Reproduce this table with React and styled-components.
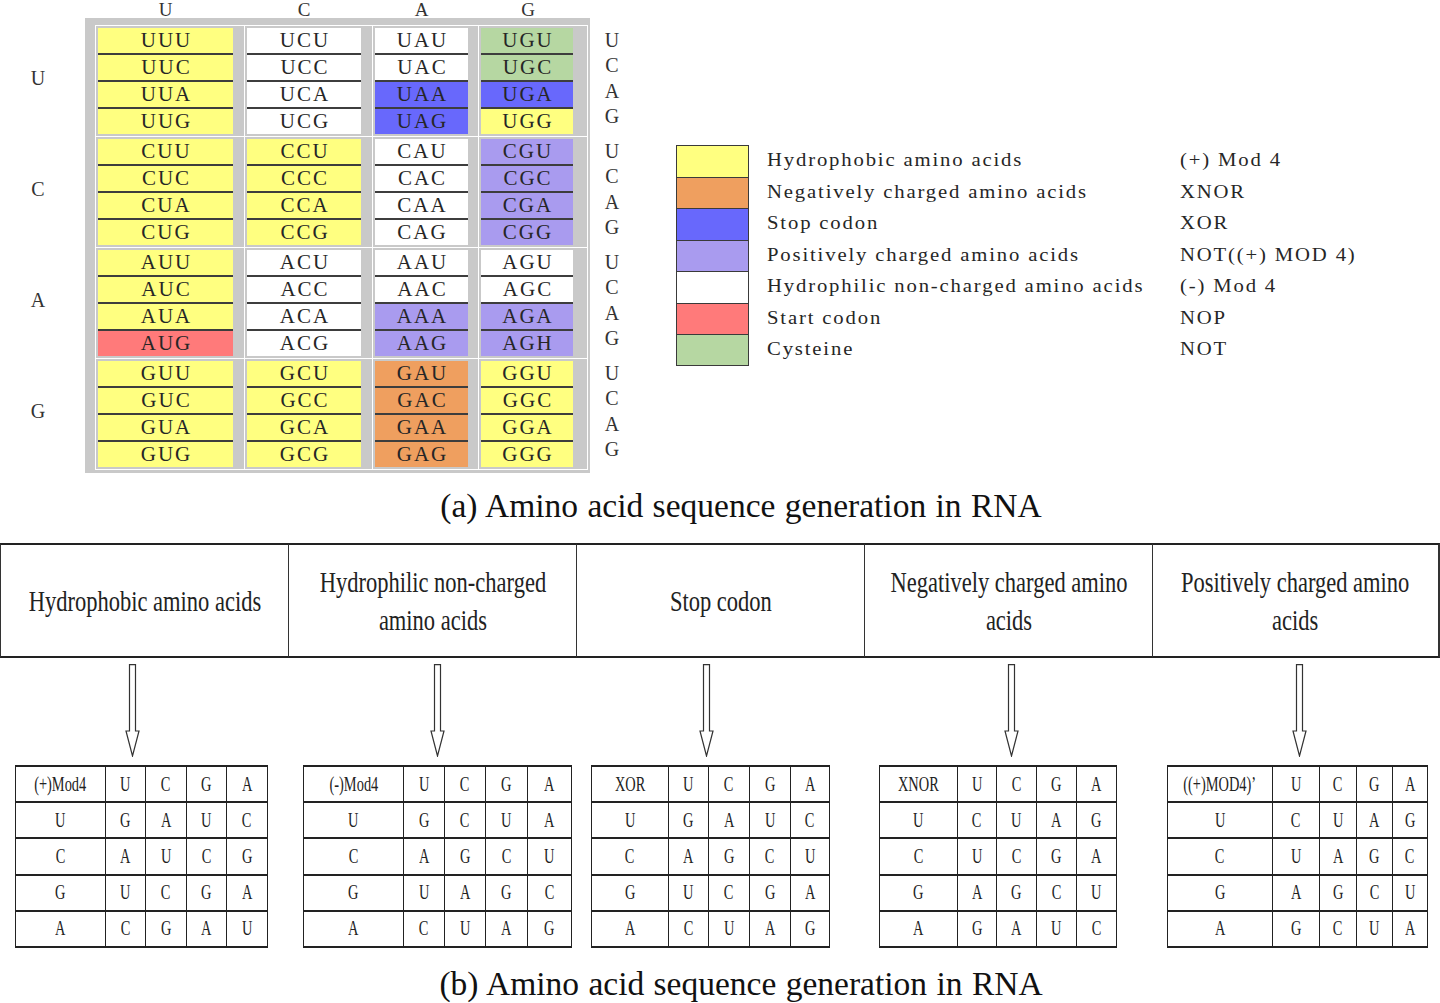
import React from "react";
import styled, { createGlobalStyle } from "styled-components";

const GlobalStyle = createGlobalStyle`
  html, body { margin: 0; padding: 0; background: #fff; overflow: hidden; }
  body { font-family: "Liberation Serif", "Times New Roman", serif; color: #222; }
  * { box-sizing: border-box; }
`;

const C = {
  Y: "#ffff80",
  W: "#ffffff",
  B: "#6868fc",
  P: "#a99bef",
  O: "#ef9f5f",
  R: "#ff7a7a",
  G: "#b6d7a2",
};

const groups = [
  [
    [["UUU", "Y"], ["UUC", "Y"], ["UUA", "Y"], ["UUG", "Y"]],
    [["UCU", "W"], ["UCC", "W"], ["UCA", "W"], ["UCG", "W"]],
    [["UAU", "W"], ["UAC", "W"], ["UAA", "B"], ["UAG", "B"]],
    [["UGU", "G"], ["UGC", "G"], ["UGA", "B"], ["UGG", "Y"]],
  ],
  [
    [["CUU", "Y"], ["CUC", "Y"], ["CUA", "Y"], ["CUG", "Y"]],
    [["CCU", "Y"], ["CCC", "Y"], ["CCA", "Y"], ["CCG", "Y"]],
    [["CAU", "W"], ["CAC", "W"], ["CAA", "W"], ["CAG", "W"]],
    [["CGU", "P"], ["CGC", "P"], ["CGA", "P"], ["CGG", "P"]],
  ],
  [
    [["AUU", "Y"], ["AUC", "Y"], ["AUA", "Y"], ["AUG", "R"]],
    [["ACU", "W"], ["ACC", "W"], ["ACA", "W"], ["ACG", "W"]],
    [["AAU", "W"], ["AAC", "W"], ["AAA", "P"], ["AAG", "P"]],
    [["AGU", "W"], ["AGC", "W"], ["AGA", "P"], ["AGH", "P"]],
  ],
  [
    [["GUU", "Y"], ["GUC", "Y"], ["GUA", "Y"], ["GUG", "Y"]],
    [["GCU", "Y"], ["GCC", "Y"], ["GCA", "Y"], ["GCG", "Y"]],
    [["GAU", "O"], ["GAC", "O"], ["GAA", "O"], ["GAG", "O"]],
    [["GGU", "Y"], ["GGC", "Y"], ["GGA", "Y"], ["GGG", "Y"]],
  ],
];

const bases = ["U", "C", "A", "G"];
const stackWidths = [135, 114, 93, 92];

const legend = [
  ["Y", "Hydrophobic amino acids", "(+) Mod 4"],
  ["O", "Negatively charged amino acids", "XNOR"],
  ["B", "Stop codon", "XOR"],
  ["P", "Positively charged amino acids", "NOT((+) MOD 4)"],
  ["W", "Hydrophilic non-charged amino acids", "(-) Mod 4"],
  ["R", "Start codon", "NOP"],
  ["G", "Cysteine", "NOT"],
];

const partB = [
  {
    head: ["Hydrophobic amino acids"],
    arrow: 124.5,
    cols: [90, 40, 41, 40, 41],
    op: "(+)Mod4",
    rows: [
      ["U", "G", "A", "U", "C"],
      ["C", "A", "U", "C", "G"],
      ["G", "U", "C", "G", "A"],
      ["A", "C", "G", "A", "U"],
    ],
  },
  {
    head: ["Hydrophilic non-charged", "amino acids"],
    arrow: 141.5,
    cols: [100, 41, 41, 42, 44],
    op: "(-)Mod4",
    rows: [
      ["U", "G", "C", "U", "A"],
      ["C", "A", "G", "C", "U"],
      ["G", "U", "A", "G", "C"],
      ["A", "C", "U", "A", "G"],
    ],
  },
  {
    head: ["Stop codon"],
    arrow: 122.5,
    cols: [77, 40, 41, 41, 39],
    op: "XOR",
    rows: [
      ["U", "G", "A", "U", "C"],
      ["C", "A", "G", "C", "U"],
      ["G", "U", "C", "G", "A"],
      ["A", "C", "U", "A", "G"],
    ],
  },
  {
    head: ["Negatively charged amino", "acids"],
    arrow: 139.5,
    cols: [78, 39, 40, 40, 40],
    op: "XNOR",
    rows: [
      ["U", "C", "U", "A", "G"],
      ["C", "U", "C", "G", "A"],
      ["G", "A", "G", "C", "U"],
      ["A", "G", "A", "U", "C"],
    ],
  },
  {
    head: ["Positively charged amino", "acids"],
    arrow: 139.5,
    cols: [105, 47, 37, 36, 35],
    op: "((+)MOD4)’",
    rows: [
      ["U", "C", "U", "A", "G"],
      ["C", "U", "A", "G", "C"],
      ["G", "A", "G", "C", "U"],
      ["A", "G", "C", "U", "A"],
    ],
  },
];

/* ---------- layout ---------- */
const Page = styled.div`
  width: 1440px;
  height: 1003px;
  display: flex;
  flex-direction: column;
`;

const TopSection = styled.div`
  display: flex;
  align-items: flex-start;
  height: 473px;
`;

const CodonBlock = styled.div`
  display: flex;
  flex-direction: column;
`;

const ColHeader = styled.div`
  display: grid;
  grid-template-columns: 135px 114px 93px 92px;
  column-gap: 14px;
  padding-left: 98px;
  height: 18px;
`;

const BaseLetter = styled.div`
  text-align: center;
  font-size: 19px;
  line-height: 19px;
  color: #333;
`;

const CodonBody = styled.div`
  display: flex;
`;

const SideLabels = styled.div`
  width: ${(p) => p.$w}px;
  padding-top: 8px;
  padding-right: ${(p) => p.$pr || 0}px;
  display: flex;
  flex-direction: column;
  gap: 1px;
`;

const SideGroup = styled.div`
  height: 110px;
  padding: 2px 0 7px;
  display: flex;
  flex-direction: column;
  justify-content: center;
`;

const SideLetter = styled.div`
  flex: ${(p) => (p.$fill ? 1 : "0 0 auto")};
  display: flex;
  align-items: center;
  justify-content: center;
  font-size: 20px;
  color: #333;
`;

const Frame = styled.div`
  background: #c9c9c9;
  padding: 7px 2px 3px 10px;
`;

const GroupGrid = styled.div`
  display: grid;
  grid-template-columns: 148px 127px 105px 108px;
  grid-auto-rows: 110px;
  gap: 1px;
  padding: 1px;
  background: #fff;
`;

const Group = styled.div`
  background: #c9c9c9;
  padding: 2px 0 0 2px;
`;

const Stack = styled.div`
  width: ${(p) => p.$w}px;
  height: 101px;
  display: flex;
  flex-direction: column;
`;

const Codon = styled.div`
  flex: 1;
  background: ${(p) => p.$bg};
  border-top: ${(p) => (p.$first ? "none" : "2px solid #3d3d3d")};
  display: flex;
  align-items: center;
  justify-content: center;
  padding-left: 2px;
  font-size: 21px;
  letter-spacing: 2px;
  color: #262626;
`;

const Legend = styled.div`
  margin-left: 42px;
  margin-top: 145px;
  display: grid;
  grid-template-columns: 73px 431px auto;
  grid-auto-rows: 31.5px;
`;

const Swatch = styled.div`
  background: ${(p) => p.$bg};
  border: 1px solid #3a3a3a;
  border-bottom: ${(p) => (p.$last ? "1px solid #3a3a3a" : "none")};
`;

const LegendCell = styled.div`
  display: flex;
  align-items: center;
  padding-left: ${(p) => p.$pl || 0}px;
`;

const WideText = styled.span`
  display: inline-block;
  font-size: 18px;
  letter-spacing: 1.6px;
  white-space: nowrap;
  transform: scaleX(1.15);
  transform-origin: left center;
  color: #262626;
`;

const Caption = styled.div`
  font-size: 33.5px;
  line-height: 40px;
  text-align: center;
  padding-left: 42px;
  word-spacing: 1px;
  color: #111;
  margin-top: ${(p) => p.$mt}px;
  margin-bottom: ${(p) => p.$mb}px;
`;

const PartB = styled.div`
  display: grid;
  grid-template-columns: repeat(5, 288px);
`;

const Column = styled.div`
  display: flex;
  flex-direction: column;
`;

const HeadBox = styled.div`
  height: 115px;
  border-top: 2px solid #222;
  border-bottom: 2px solid #222;
  border-left: 1px solid #333;
  border-right: ${(p) => (p.$last ? "2px solid #333" : "none")};
  display: flex;
  align-items: center;
  justify-content: center;
`;

const HeadText = styled.span`
  display: inline-block;
  font-size: 30px;
  line-height: 38px;
  text-align: center;
  white-space: nowrap;
  transform: scaleX(0.75);
  color: #222;
`;

const ArrowRow = styled.div`
  height: 107px;
  padding-top: 6px;
  padding-left: ${(p) => p.$x}px;
`;

const DataTable = styled.div`
  display: grid;
  grid-template-columns: ${(p) => p.$cols};
  width: max-content;
  margin-left: 15px;
  border-top: 2px solid #222;
  border-left: 1px solid #222;
`;

const Cell = styled.div`
  height: 36.2px;
  border-right: 1px solid #222;
  border-bottom: 2px solid #222;
  display: flex;
  align-items: center;
  justify-content: center;
`;

const CellText = styled.span`
  display: inline-block;
  font-size: 20px;
  white-space: nowrap;
  transform: scaleX(0.72);
  color: #222;
`;

const Arrow = () => (
  <svg width="15" height="93" viewBox="0 0 15 93">
    <path
      d="M4.5 0.6 H10.5 V67 H14 L7.5 92 L1 67 H4.5 Z"
      fill="#fff"
      stroke="#333"
      strokeWidth="1.2"
    />
  </svg>
);

export default function App() {
  return (
    <>
      <GlobalStyle />
      <Page>
        <TopSection>
          <CodonBlock>
            <ColHeader>
              {bases.map((b) => (
                <BaseLetter key={b}>{b}</BaseLetter>
              ))}
            </ColHeader>
            <CodonBody>
              <SideLabels $w={85} $pr={9}>
                {bases.map((b) => (
                  <SideGroup key={b}>
                    <SideLetter>{b}</SideLetter>
                  </SideGroup>
                ))}
              </SideLabels>
              <Frame>
                <GroupGrid>
                  {groups.map((row, ri) =>
                    row.map((stack, ci) => (
                      <Group key={`${ri}-${ci}`}>
                        <Stack $w={stackWidths[ci]}>
                          {stack.map(([t, c], k) => (
                            <Codon key={t} $bg={C[c]} $first={k === 0}>
                              {t}
                            </Codon>
                          ))}
                        </Stack>
                      </Group>
                    ))
                  )}
                </GroupGrid>
              </Frame>
              <SideLabels $w={44}>
                {bases.map((g) => (
                  <SideGroup key={g}>
                    {bases.map((b) => (
                      <SideLetter key={b} $fill>
                        {b}
                      </SideLetter>
                    ))}
                  </SideGroup>
                ))}
              </SideLabels>
            </CodonBody>
          </CodonBlock>
          <Legend>
            {legend.map(([c, label, op], i) => (
              <React.Fragment key={label}>
                <Swatch $bg={C[c]} $last={i === legend.length - 1} />
                <LegendCell $pl={18}>
                  <WideText>{label}</WideText>
                </LegendCell>
                <LegendCell>
                  <WideText>{op}</WideText>
                </LegendCell>
              </React.Fragment>
            ))}
          </Legend>
        </TopSection>

        <Caption $mt={13} $mb={17}>(a) Amino acid sequence generation in RNA</Caption>

        <PartB>
          {partB.map((col, i) => (
            <Column key={i}>
              <HeadBox $last={i === partB.length - 1}>
                <HeadText>
                  {col.head.map((line, k) => (
                    <React.Fragment key={k}>
                      {k > 0 && <br />}
                      {line}
                    </React.Fragment>
                  ))}
                </HeadText>
              </HeadBox>
              <ArrowRow $x={col.arrow}>
                <Arrow />
              </ArrowRow>
              <DataTable $cols={col.cols.map((w) => `${w}px`).join(" ")}>
                {[col.op, "U", "C", "G", "A"].map((t, k) => (
                  <Cell key={`h${k}`}>
                    <CellText>{t}</CellText>
                  </Cell>
                ))}
                {col.rows.map((r, ri) =>
                  r.map((t, k) => (
                    <Cell key={`${ri}-${k}`}>
                      <CellText>{t}</CellText>
                    </Cell>
                  ))
                )}
              </DataTable>
            </Column>
          ))}
        </PartB>

        <Caption $mt={16} $mb={0}>(b) Amino acid sequence generation in RNA</Caption>
      </Page>
    </>
  );
}
